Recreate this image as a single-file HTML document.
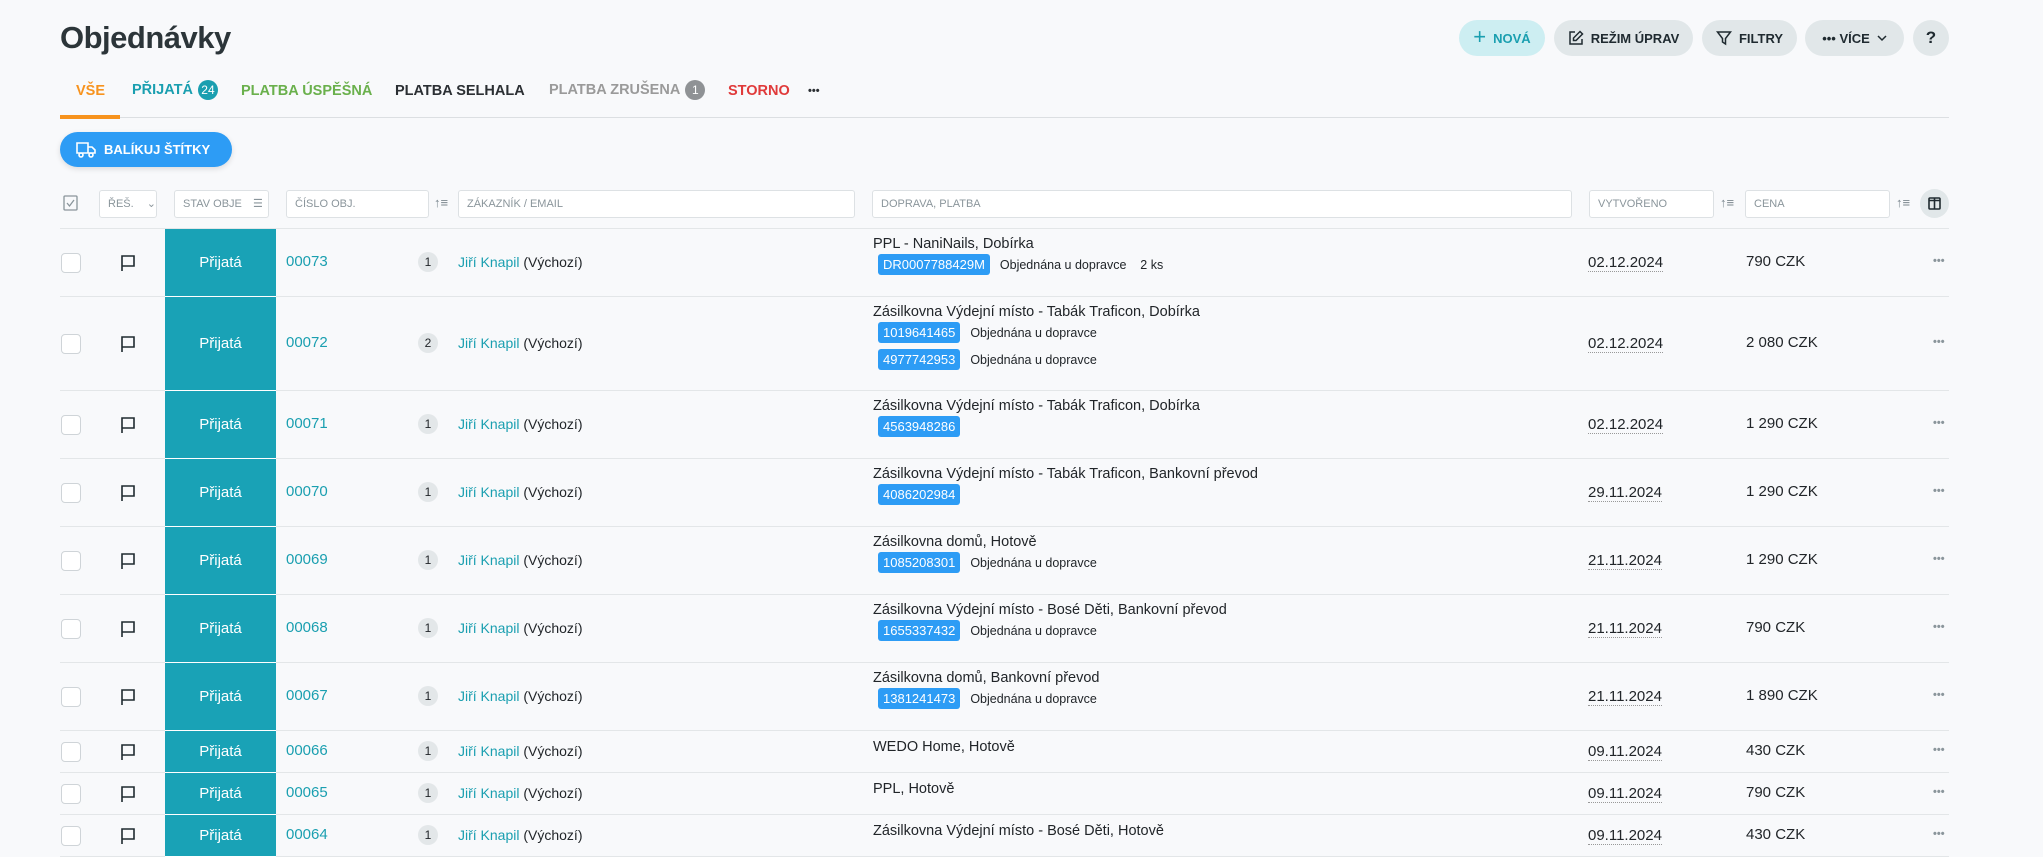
<!DOCTYPE html>
<html><head><meta charset="utf-8">
<style>
*{box-sizing:border-box;margin:0;padding:0}
body{width:2043px;height:855px;overflow:hidden;background:#f8f9fb;font-family:"Liberation Sans",sans-serif;color:#212529;position:relative}
.a{position:absolute}
h1{position:absolute;left:60px;top:20px;font-size:31px;font-weight:bold;color:#2c3539;letter-spacing:-0.5px}
.btn{position:absolute;top:20px;height:36px;border-radius:18px;background:#e1e7e9;font-size:13px;font-weight:bold;color:#1f2a30;display:flex;align-items:center;justify-content:center;gap:7px}
.tab{position:absolute;top:82px;font-size:14.5px;font-weight:bold;white-space:nowrap;line-height:18px}
.badge{display:inline-block;width:20px;height:20px;border-radius:10px;color:#fff;font-size:12px;text-align:center;line-height:20px;vertical-align:middle;margin-left:5px;font-weight:normal}
.inp{position:absolute;top:190px;height:28px;border:1px solid #dde1e4;border-radius:3px;background:#fff;font-size:11px;color:#8a959b;padding-left:8px;line-height:26px}
.row{position:absolute;left:60px;width:1889px;border-bottom:1px solid #e3e6e8}
.row>*{position:absolute}
.cb{left:1px;width:20px;height:20px;border:1px solid #cfd4d8;border-radius:4px;background:#fff}
.st{left:105px;width:111px;top:0;bottom:-1px;background:#19a2b6;color:#fff;font-size:15px;display:flex;align-items:center;justify-content:center;border-bottom:1px solid #fff}
.num{left:226px;color:#1a9fb0;font-size:15px}
.cnt{left:358px;width:20px;height:20px;border-radius:10px;background:#e3e7e9;font-size:12px;text-align:center;line-height:20px;margin-top:-1px}
.cus{left:398px;font-size:14px;color:#1a9fb0;white-space:nowrap;margin-top:1px}
.cus span{color:#212529}
.sh{left:813px;font-size:14.5px;white-space:nowrap}
.tg{display:inline-block;background:#2d9cf5;color:#fff;font-size:13px;padding:0 5px;height:21px;line-height:21px;border-radius:3px;margin-left:5px;margin-right:10px}
.tl{font-size:12.5px;height:27px;line-height:27px}
.dt{left:1528px;font-size:15px;border-bottom:1px dotted #999;line-height:17px}
.pr{left:1686px;font-size:15px}
.dots{left:1873px;color:#8a959b;font-size:11px;letter-spacing:0px;font-weight:bold;margin-top:2px}
.fl{left:60px}
</style></head><body>
<h1>Objednávky</h1>
<div class="btn" style="left:1459px;width:86px;background:#cdeef2;color:#1a9fb0"><span style="font-size:22px;font-weight:normal;margin-top:-3px">+</span>NOVÁ</div>
<div class="btn" style="left:1554px;width:139px"><svg width="16" height="16" viewBox="0 0 16 16" fill="none" stroke="#1f2a30" stroke-width="1.5"><path d="M7 2H2v12h12V9"/><path d="M12 1.5l2.5 2.5L8 10.5H5.5V8z"/></svg>REŽIM ÚPRAV</div>
<div class="btn" style="left:1702px;width:95px"><svg width="16" height="16" viewBox="0 0 16 16" fill="none" stroke="#1f2a30" stroke-width="1.5"><path d="M1.5 2h13L9.5 8.5V14l-3-2V8.5z"/></svg>FILTRY</div>
<div class="btn" style="left:1805px;width:99px">•••&nbsp;VÍCE <svg width="10" height="8" viewBox="0 0 10 8" fill="none" stroke="#1f2a30" stroke-width="1.5"><path d="M1 2l4 4 4-4"/></svg></div>
<div class="btn" style="left:1913px;width:36px;font-size:17px">?</div>

<div class="tab" style="left:76px;color:#f7931e">VŠE</div>
<div class="tab" style="left:132px;top:80px;color:#1a9fb0">PŘIJATÁ<span class="badge" style="background:#1a9fb0">24</span></div>
<div class="tab" style="left:241px;color:#6ab04c">PLATBA ÚSPĚŠNÁ</div>
<div class="tab" style="left:395px;color:#2b2f33">PLATBA SELHALA</div>
<div class="tab" style="left:549px;top:80px;color:#9a9a9a">PLATBA ZRUŠENA<span class="badge" style="background:#8f9295">1</span></div>
<div class="tab" style="left:728px;color:#e03a3a">STORNO</div>
<div class="tab" style="left:808px;color:#2b2f33;font-size:11px">•••</div>
<div class="a" style="left:60px;top:117px;width:1889px;height:1px;background:#dcdfe2"></div>
<div class="a" style="left:60px;top:115px;width:60px;height:4px;background:#f7931e"></div>

<div class="a" style="left:60px;top:132px;width:172px;height:35px;border-radius:18px;background:#2d9cf5;color:#fff;font-size:13px;font-weight:bold;display:flex;align-items:center;padding-left:16px;gap:8px;box-shadow:0 2px 6px rgba(0,0,0,.12)"><svg width="20" height="18" viewBox="0 0 20 18" fill="none" stroke="#fff" stroke-width="1.6"><path d="M1 2h11v10H1zM12 6h4l3 3v3h-7"/><circle cx="5" cy="14" r="2"/><circle cx="15" cy="14" r="2"/></svg>BALÍKUJ ŠTÍTKY</div>

<svg class="a" style="left:63px;top:195px" width="15" height="16" viewBox="0 0 15 16" fill="none" stroke="#8a959b" stroke-width="1.3"><rect x="1" y="1" width="13" height="14" rx="1"/><path d="M4 8l2.5 3L11 5"/></svg>
<div class="inp" style="left:99px;width:58px">ŘEŠ. <span style="margin-left:10px">⌄</span></div>
<div class="inp" style="left:174px;width:95px">STAV OBJE <span style="margin-left:8px">☰</span></div>
<div class="inp" style="left:286px;width:143px">ČÍSLO OBJ.</div>
<div class="a" style="left:434px;top:195px;font-size:13px;color:#7b878e">↑≡</div>
<div class="inp" style="left:458px;width:397px">ZÁKAZNÍK / EMAIL</div>
<div class="inp" style="left:872px;width:700px">DOPRAVA, PLATBA</div>
<div class="inp" style="left:1589px;width:125px">VYTVOŘENO</div>
<div class="a" style="left:1720px;top:195px;font-size:13px;color:#7b878e">↑≡</div>
<div class="inp" style="left:1745px;width:145px">CENA</div>
<div class="a" style="left:1896px;top:195px;font-size:13px;color:#7b878e">↑≡</div>
<div class="a" style="left:1920px;top:189px;width:29px;height:29px;border-radius:15px;background:#e1e7e9"><svg style="margin:8px" width="13" height="13" viewBox="0 0 13 13" fill="none" stroke="#1f2a30" stroke-width="1.6"><rect x="1" y="1" width="11" height="11" rx="1"/><path d="M6.5 1v11M1 3.5h11"/></svg></div>
<div class="a" style="left:60px;top:228px;width:1889px;height:1px;background:#e3e6e8"></div>

<div class="row" style="top:229px;height:68px">
<div class="cb" style="top:24px"></div><svg class="fl" style="top:25px" width="16" height="18" viewBox="0 0 16 18" fill="none" stroke="#1f2a30" stroke-width="1.6"><path d="M2 17V2h12v10H2"/></svg>
<div class="st">Přijatá</div><div class="num" style="top:24px">00073</div><div class="cnt" style="top:24px">1</div><div class="cus" style="top:24px">Jiří Knapil <span>(Výchozí)</span></div>
<div class="sh" style="top:7px">PPL - NaniNails, Dobírka<div class="tl"><span class="tg">DR0007788429M</span>Objednána u dopravce &nbsp;&nbsp; 2 ks</div></div>
<div class="dt" style="top:25px">02.12.2024</div><div class="pr" style="top:24px">790 CZK</div><div class="dots" style="top:24px">•••</div></div>

<div class="row" style="top:297px;height:94px">
<div class="cb" style="top:37px"></div><svg class="fl" style="top:38px" width="16" height="18" viewBox="0 0 16 18" fill="none" stroke="#1f2a30" stroke-width="1.6"><path d="M2 17V2h12v10H2"/></svg>
<div class="st">Přijatá</div><div class="num" style="top:37px">00072</div><div class="cnt" style="top:37px">2</div><div class="cus" style="top:37px">Jiří Knapil <span>(Výchozí)</span></div>
<div class="sh" style="top:7px">Zásilkovna Výdejní místo - Tabák Traficon, Dobírka<div class="tl"><span class="tg">1019641465</span>Objednána u dopravce</div><div class="tl"><span class="tg">4977742953</span>Objednána u dopravce</div></div>
<div class="dt" style="top:38px">02.12.2024</div><div class="pr" style="top:37px">2 080 CZK</div><div class="dots" style="top:37px">•••</div></div>

<div class="row" style="top:391px;height:68px">
<div class="cb" style="top:24px"></div><svg class="fl" style="top:25px" width="16" height="18" viewBox="0 0 16 18" fill="none" stroke="#1f2a30" stroke-width="1.6"><path d="M2 17V2h12v10H2"/></svg>
<div class="st">Přijatá</div><div class="num" style="top:24px">00071</div><div class="cnt" style="top:24px">1</div><div class="cus" style="top:24px">Jiří Knapil <span>(Výchozí)</span></div>
<div class="sh" style="top:7px">Zásilkovna Výdejní místo - Tabák Traficon, Dobírka<div class="tl"><span class="tg">4563948286</span></div></div>
<div class="dt" style="top:25px">02.12.2024</div><div class="pr" style="top:24px">1 290 CZK</div><div class="dots" style="top:24px">•••</div></div>

<div class="row" style="top:459px;height:68px">
<div class="cb" style="top:24px"></div><svg class="fl" style="top:25px" width="16" height="18" viewBox="0 0 16 18" fill="none" stroke="#1f2a30" stroke-width="1.6"><path d="M2 17V2h12v10H2"/></svg>
<div class="st">Přijatá</div><div class="num" style="top:24px">00070</div><div class="cnt" style="top:24px">1</div><div class="cus" style="top:24px">Jiří Knapil <span>(Výchozí)</span></div>
<div class="sh" style="top:7px">Zásilkovna Výdejní místo - Tabák Traficon, Bankovní převod<div class="tl"><span class="tg">4086202984</span></div></div>
<div class="dt" style="top:25px">29.11.2024</div><div class="pr" style="top:24px">1 290 CZK</div><div class="dots" style="top:24px">•••</div></div>

<div class="row" style="top:527px;height:68px">
<div class="cb" style="top:24px"></div><svg class="fl" style="top:25px" width="16" height="18" viewBox="0 0 16 18" fill="none" stroke="#1f2a30" stroke-width="1.6"><path d="M2 17V2h12v10H2"/></svg>
<div class="st">Přijatá</div><div class="num" style="top:24px">00069</div><div class="cnt" style="top:24px">1</div><div class="cus" style="top:24px">Jiří Knapil <span>(Výchozí)</span></div>
<div class="sh" style="top:7px">Zásilkovna domů, Hotově<div class="tl"><span class="tg">1085208301</span>Objednána u dopravce</div></div>
<div class="dt" style="top:25px">21.11.2024</div><div class="pr" style="top:24px">1 290 CZK</div><div class="dots" style="top:24px">•••</div></div>

<div class="row" style="top:595px;height:68px">
<div class="cb" style="top:24px"></div><svg class="fl" style="top:25px" width="16" height="18" viewBox="0 0 16 18" fill="none" stroke="#1f2a30" stroke-width="1.6"><path d="M2 17V2h12v10H2"/></svg>
<div class="st">Přijatá</div><div class="num" style="top:24px">00068</div><div class="cnt" style="top:24px">1</div><div class="cus" style="top:24px">Jiří Knapil <span>(Výchozí)</span></div>
<div class="sh" style="top:7px">Zásilkovna Výdejní místo - Bosé Děti, Bankovní převod<div class="tl"><span class="tg">1655337432</span>Objednána u dopravce</div></div>
<div class="dt" style="top:25px">21.11.2024</div><div class="pr" style="top:24px">790 CZK</div><div class="dots" style="top:24px">•••</div></div>

<div class="row" style="top:663px;height:68px">
<div class="cb" style="top:24px"></div><svg class="fl" style="top:25px" width="16" height="18" viewBox="0 0 16 18" fill="none" stroke="#1f2a30" stroke-width="1.6"><path d="M2 17V2h12v10H2"/></svg>
<div class="st">Přijatá</div><div class="num" style="top:24px">00067</div><div class="cnt" style="top:24px">1</div><div class="cus" style="top:24px">Jiří Knapil <span>(Výchozí)</span></div>
<div class="sh" style="top:7px">Zásilkovna domů, Bankovní převod<div class="tl"><span class="tg">1381241473</span>Objednána u dopravce</div></div>
<div class="dt" style="top:25px">21.11.2024</div><div class="pr" style="top:24px">1 890 CZK</div><div class="dots" style="top:24px">•••</div></div>

<div class="row" style="top:731px;height:42px">
<div class="cb" style="top:11px"></div><svg class="fl" style="top:12px" width="16" height="18" viewBox="0 0 16 18" fill="none" stroke="#1f2a30" stroke-width="1.6"><path d="M2 17V2h12v10H2"/></svg>
<div class="st">Přijatá</div><div class="num" style="top:11px">00066</div><div class="cnt" style="top:11px">1</div><div class="cus" style="top:11px">Jiří Knapil <span>(Výchozí)</span></div>
<div class="sh" style="top:8px">WEDO Home, Hotově</div>
<div class="dt" style="top:12px">09.11.2024</div><div class="pr" style="top:11px">430 CZK</div><div class="dots" style="top:11px">•••</div></div>

<div class="row" style="top:773px;height:42px">
<div class="cb" style="top:11px"></div><svg class="fl" style="top:12px" width="16" height="18" viewBox="0 0 16 18" fill="none" stroke="#1f2a30" stroke-width="1.6"><path d="M2 17V2h12v10H2"/></svg>
<div class="st">Přijatá</div><div class="num" style="top:11px">00065</div><div class="cnt" style="top:11px">1</div><div class="cus" style="top:11px">Jiří Knapil <span>(Výchozí)</span></div>
<div class="sh" style="top:8px">PPL, Hotově</div>
<div class="dt" style="top:12px">09.11.2024</div><div class="pr" style="top:11px">790 CZK</div><div class="dots" style="top:11px">•••</div></div>

<div class="row" style="top:815px;height:42px">
<div class="cb" style="top:11px"></div><svg class="fl" style="top:12px" width="16" height="18" viewBox="0 0 16 18" fill="none" stroke="#1f2a30" stroke-width="1.6"><path d="M2 17V2h12v10H2"/></svg>
<div class="st">Přijatá</div><div class="num" style="top:11px">00064</div><div class="cnt" style="top:11px">1</div><div class="cus" style="top:11px">Jiří Knapil <span>(Výchozí)</span></div>
<div class="sh" style="top:8px">Zásilkovna Výdejní místo - Bosé Děti, Hotově</div>
<div class="dt" style="top:12px">09.11.2024</div><div class="pr" style="top:11px">430 CZK</div><div class="dots" style="top:11px">•••</div></div>
</body></html>
